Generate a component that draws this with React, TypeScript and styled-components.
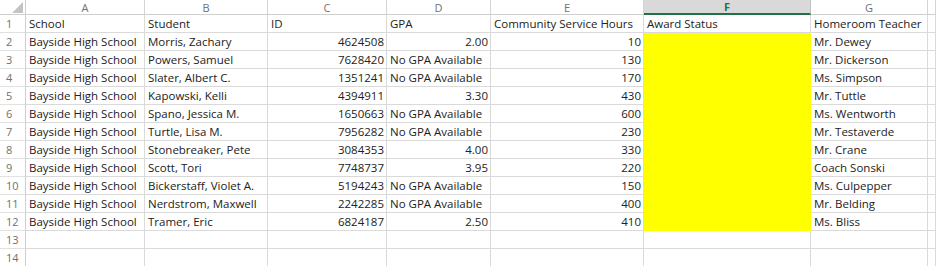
import React from "react";
import styled, { createGlobalStyle, css } from "styled-components";

const Global = createGlobalStyle`
  html, body { margin: 0; padding: 0; background: #fff; }
  body { font-family: "Open Sans", "Noto Sans", sans-serif; overflow: hidden; }
`;

const COLS = [119, 123, 119, 104, 153, 167, 117];
const LETTERS = ["A", "B", "C", "D", "E", "F", "G", ""];
const SELECTED = 5;

const Sheet = styled.div`
  display: grid;
  grid-template-columns: 26px ${COLS.map((c) => `${c}px`).join(" ")} 1fr;
  grid-auto-rows: 18px;
  grid-template-rows: 15px;
  width: 936px;
  height: 266px;
  overflow: hidden;
  font-size: 11.5px;
  color: #222;
`;

const Corner = styled.div`
  position: relative;
  border-right: 1px solid #cfcfcf;
  border-bottom: 1px solid #cfcfcf;
  background: #fff;
  &::after {
    content: "";
    position: absolute;
    right: 2px;
    bottom: 1px;
    width: 0;
    height: 0;
    border-style: solid;
    border-width: 0 0 11px 11px;
    border-color: transparent transparent #c4c4c4 transparent;
  }
`;

const ColHead = styled.div<{ $selected?: boolean }>`
  display: flex;
  align-items: center;
  justify-content: center;
  border-right: 1px solid #d4d4d4;
  border-bottom: 1px solid #cfcfcf;
  background: #fff;
  color: #707070;
  font-size: 11px;
  line-height: 1;
  ${(p) =>
    p.$selected &&
    css`
      background: #d9d9d9;
      color: #217346;
      font-weight: 700;
      border-bottom: 2px solid #217346;
      border-right-color: #c0c0c0;
    `}
`;

const RowHead = styled.div`
  display: flex;
  align-items: center;
  padding-left: 6px;
  border-right: 1px solid #cfcfcf;
  border-bottom: 1px solid #e1e1e1;
  color: #707070;
  font-size: 11px;
`;

const Cell = styled.div<{ $align?: "left" | "right"; $fill?: string }>`
  display: flex;
  align-items: center;
  justify-content: ${(p) => (p.$align === "right" ? "flex-end" : "flex-start")};
  padding: 0 2px 0 3px;
  border-right: 1px solid #dadada;
  border-bottom: 1px solid #dadada;
  background: ${(p) => p.$fill ?? "#fff"};
  white-space: nowrap;
  overflow: hidden;
  ${(p) =>
    p.$fill &&
    css`
      border-right-color: ${p.$fill};
      border-bottom-color: ${p.$fill};
    `}
`;

type Row = [string, string, string, string, string, string];

const DATA: Row[] = [
  ["Bayside High School", "Morris, Zachary", "4624508", "2.00", "10", "Mr. Dewey"],
  ["Bayside High School", "Powers, Samuel", "7628420", "No GPA Available", "130", "Mr. Dickerson"],
  ["Bayside High School", "Slater, Albert C.", "1351241", "No GPA Available", "170", "Ms. Simpson"],
  ["Bayside High School", "Kapowski, Kelli", "4394911", "3.30", "430", "Mr. Tuttle"],
  ["Bayside High School", "Spano, Jessica M.", "1650663", "No GPA Available", "600", "Ms. Wentworth"],
  ["Bayside High School", "Turtle, Lisa M.", "7956282", "No GPA Available", "230", "Mr. Testaverde"],
  ["Bayside High School", "Stonebreaker, Pete", "3084353", "4.00", "330", "Mr. Crane"],
  ["Bayside High School", "Scott, Tori", "7748737", "3.95", "220", "Coach Sonski"],
  ["Bayside High School", "Bickerstaff, Violet A.", "5194243", "No GPA Available", "150", "Ms. Culpepper"],
  ["Bayside High School", "Nerdstrom, Maxwell", "2242285", "No GPA Available", "400", "Mr. Belding"],
  ["Bayside High School", "Tramer, Eric", "6824187", "2.50", "410", "Ms. Bliss"],
];

const HEADERS = ["School", "Student", "ID", "GPA", "Community Service Hours", "Award Status", "Homeroom Teacher", ""];

const isNumeric = (v: string) => /^[\d.]+$/.test(v);

export default function App() {
  const rows: React.ReactNode[] = [];

  rows.push(<Corner key="corner" />);
  LETTERS.forEach((l, i) =>
    rows.push(
      <ColHead key={`h-${i}`} $selected={i === SELECTED}>
        {l}
      </ColHead>
    )
  );

  rows.push(<RowHead key="r1">1</RowHead>);
  HEADERS.forEach((h, i) => rows.push(<Cell key={`c1-${i}`}>{h}</Cell>));

  DATA.forEach((r, ri) => {
    const n = ri + 2;
    rows.push(<RowHead key={`r${n}`}>{n}</RowHead>);
    const [school, student, id, gpa, hours, teacher] = r;
    const cells = [school, student, id, gpa, hours, "", teacher, ""];
    cells.forEach((v, ci) =>
      rows.push(
        <Cell
          key={`c${n}-${ci}`}
          $align={isNumeric(v) ? "right" : "left"}
          $fill={ci === SELECTED ? "#ffff00" : undefined}
        >
          {v}
        </Cell>
      )
    );
  });

  [13, 14].forEach((n) => {
    rows.push(<RowHead key={`r${n}`}>{n}</RowHead>);
    for (let ci = 0; ci < 8; ci++) rows.push(<Cell key={`c${n}-${ci}`} />);
  });

  return (
    <>
      <Global />
      <Sheet>{rows}</Sheet>
    </>
  );
}
